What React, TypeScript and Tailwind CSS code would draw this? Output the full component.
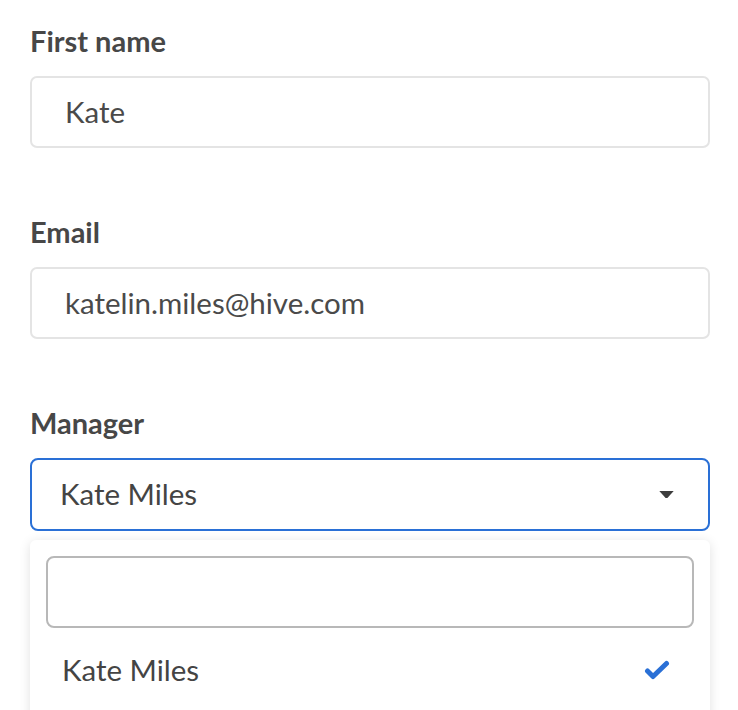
import * as React from 'react'

const font = { fontFamily: 'Lato, "Open Sans", sans-serif' }

function Field({ label, value }: { label: string; value: string }) {
  return (
    <div className="flex flex-col">
      <label className="text-[29px] font-bold leading-none text-[#474747]">{label}</label>
      <div className="mt-[21px] flex h-[72px] items-center rounded-[7px] border-2 border-[#e4e4e4] bg-white px-[33px] text-[29.5px] text-[#4a4a4a]">
        {value}
      </div>
    </div>
  )
}

export default function App() {
  return (
    <div className="min-h-screen bg-white" style={font}>
      <div className="flex w-[710px] flex-col gap-[69px] pl-[30px] pt-[26px]">
        <Field label="First name" value="Kate" />
        <Field label="Email" value="katelin.miles@hive.com" />
        <div className="flex flex-col">
          <label className="text-[29px] font-bold leading-none text-[#474747]">Manager</label>
          <div className="mt-[21px] flex h-[73px] items-center justify-between rounded-[8px] border-2 border-[#2a70d6] bg-white pl-[28px] pr-[33px] text-[29.5px] text-[#444]">
            <span>Kate Miles</span>
            <svg viewBox="0 0 18 10" className="h-[9px] w-[17px]" aria-hidden="true">
              <path d="M1 1h16l-7 8h-2z" fill="#3d3d3d" />
            </svg>
          </div>
          {/* Dropdown */}
          <div className="mt-[9px] rounded-t-[6px] bg-white px-[16px] pt-[16px] pb-[40px] shadow-[0_2px_12px_rgba(0,0,0,0.12)]">
            <div className="h-[72px] rounded-[8px] border-2 border-[#b8b8b8]" />
            <div className="mt-[20px] flex items-center justify-between pl-[16px] pr-[24px] text-[29.5px] text-[#444]">
              <span>Kate Miles</span>
              <svg viewBox="0 0 26 20" className="h-[20px] w-[26px]" aria-hidden="true">
                <path
                  d="M3.5 11l5.5 5.5L22.5 3.5"
                  fill="none"
                  stroke="#2a70d6"
                  strokeWidth="5"
                  strokeLinecap="round"
                  strokeLinejoin="round"
                />
              </svg>
            </div>
          </div>
        </div>
      </div>
    </div>
  )
}
